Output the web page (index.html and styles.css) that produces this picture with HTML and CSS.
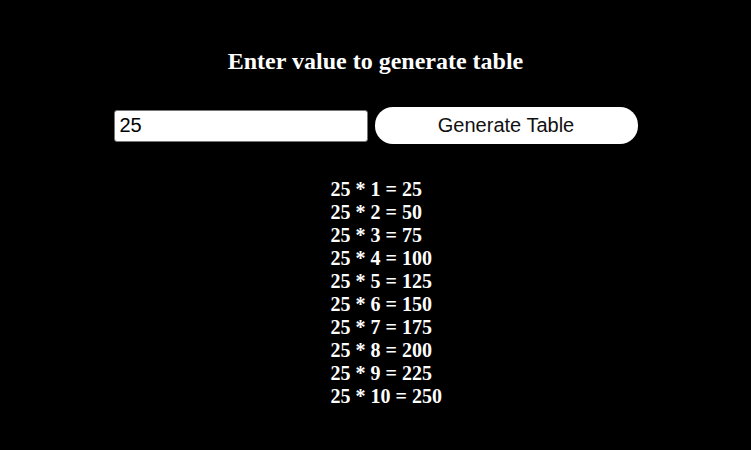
FILE: index.html
```html
<!DOCTYPE html>
<html>
<head>
<meta charset="utf-8">
<link rel="stylesheet" href="styles.css">
</head>
<body>
<div class="page">
  <h2 class="title">Enter value to generate table</h2>
  <div class="controls">
    <input class="num" type="text" value="25">
    <button class="gen">Generate Table</button>
  </div>
  <div class="table">
    <div>25 * 1 = 25</div>
    <div>25 * 2 = 50</div>
    <div>25 * 3 = 75</div>
    <div>25 * 4 = 100</div>
    <div>25 * 5 = 125</div>
    <div>25 * 6 = 150</div>
    <div>25 * 7 = 175</div>
    <div>25 * 8 = 200</div>
    <div>25 * 9 = 225</div>
    <div>25 * 10 = 250</div>
  </div>
</div>
</body>
</html>
```
FILE: styles.css
```css
html, body {
  margin: 0;
  background: #000;
  color: #fff;
  font-family: "Liberation Serif", "Times New Roman", serif;
}
.page {
  padding-top: 46px;
}
.title {
  margin: 0;
  text-align: center;
  font-size: 24px;
  font-weight: bold;
  line-height: 30px;
}
.controls {
  display: flex;
  justify-content: center;
  align-items: center;
  gap: 7px;
  margin-top: 31px;
}
.num {
  box-sizing: border-box;
  width: 254px;
  height: 32px;
  border: 1px solid #767676;
  border-radius: 3px;
  padding: 0 5px;
  font-family: "Liberation Sans", Arial, sans-serif;
  font-size: 20px;
  color: #000;
  background: #fff;
}
.gen {
  box-sizing: border-box;
  width: 263px;
  height: 37px;
  border: none;
  border-radius: 18px;
  background: #fff;
  color: #111;
  font-family: "Liberation Sans", Arial, sans-serif;
  font-size: 20px;
}
.table {
  width: 90px;
  margin: 34px auto 0;
  white-space: nowrap;
  font-size: 20px;
  font-weight: bold;
  line-height: 23px;
}
```
